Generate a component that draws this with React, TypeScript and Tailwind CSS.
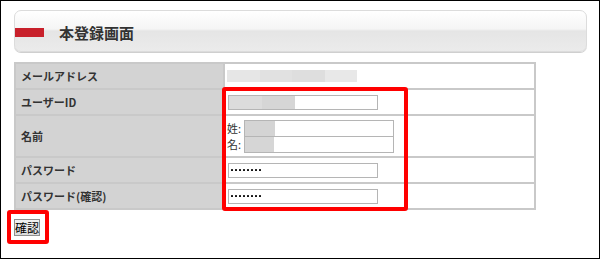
import React from "react";

const Blur = ({ w, h, shades }: { w: number; h: number; shades: string[] }) => (
  <div className="flex" style={{ width: w, height: h }}>
    {shades.map((c, i) => (
      <div key={i} className="flex-1 h-full" style={{ background: c }} />
    ))}
  </div>
);

const Dots = () => (
  <div className="flex gap-[2px] ml-[2px]">
    {Array.from({ length: 8 }).map((_, i) => (
      <div key={i} className="w-[2px] h-[2px] bg-[#111] rounded-[0.5px]" />
    ))}
  </div>
);

export default function App() {
  const label = "pl-[5px] text-[11px] font-bold text-[#333] bg-[#d3d3d3] border-2 border-[#c9c9c9] align-middle";
  const val = "pl-[2px] bg-white border-2 border-[#c9c9c9] align-middle";
  return (
    <div
      className="relative w-[600px] h-[259px] border border-black bg-white overflow-hidden"
      style={{ fontFamily: "'Noto Sans CJK JP', 'Noto Sans', sans-serif" }}
    >
      {/* Header */}
      <div className="ml-[13px] mt-[9px] w-[573px] h-[42px] rounded-[7px] border border-[#dcdcdc] bg-[linear-gradient(to_bottom,#ffffff_0%,#f5f5f5_45%,#e5e5e5_50%,#ebebeb_100%)] flex items-center shadow-[0_1px_0_#cfcfcf]">
        <div className="w-[29px] h-[9px] bg-[#c8202b] ml-0 mt-[2px]" />
        <div className="ml-[15px] mt-[2px] text-[15px] font-bold text-[#333] leading-none">本登録画面</div>
      </div>

      {/* Table */}
      <table className="ml-[13px] mt-[10px] border-collapse w-[522px]">
        <tbody>
          <tr className="h-[26px]">
            <td className={label + " w-[209px]"}>メールアドレス</td>
            <td className={val}>
              <Blur w={130} h={12} shades={["#e6e6e6", "#e1e1e1", "#dedede", "#e8e8e8"]} />
            </td>
          </tr>
          <tr className="h-[26px]">
            <td className={label}>ユーザーID</td>
            <td className={val}>
              <div className="w-[150px] h-[15px] border border-[#b5b5b5] bg-white flex ml-[1px]">
                <Blur w={66} h={13} shades={["#dcdcdc", "#d6d6d6"]} />
              </div>
            </td>
          </tr>
          <tr className="h-[42px]">
            <td className={label}>名前</td>
            <td className={val}>
              <div className="flex flex-col text-[11px] text-[#333] leading-none">
                <div className="flex items-center">
                  <span className="w-[17px]">姓:</span>
                  <div className="w-[150px] h-[17px] border border-[#b5b5b5] bg-white flex">
                    <Blur w={30} h={15} shades={["#d4d4d4"]} />
                  </div>
                </div>
                <div className="flex items-center -mt-[1px]">
                  <span className="w-[17px]">名:</span>
                  <div className="w-[150px] h-[17px] border border-[#b5b5b5] bg-white flex">
                    <Blur w={29} h={15} shades={["#d6d6d6"]} />
                  </div>
                </div>
              </div>
            </td>
          </tr>
          <tr className="h-[26px]">
            <td className={label}>パスワード</td>
            <td className={val}>
              <div className="w-[150px] h-[15px] border border-[#b5b5b5] bg-white flex items-center ml-[1px]">
                <Dots />
              </div>
            </td>
          </tr>
          <tr className="h-[26px]">
            <td className={label}>パスワード(確認)</td>
            <td className={val}>
              <div className="w-[150px] h-[15px] border border-[#b5b5b5] bg-white flex items-center ml-[1px]">
                <Dots />
              </div>
            </td>
          </tr>
        </tbody>
      </table>

      {/* Button */}
      <div className="ml-[13px] mt-[9px] w-[26px] h-[17px] border border-[#8f8f8f] bg-[linear-gradient(to_bottom,#f2f2f2,#dcdcdc)] text-[12px] leading-none text-black flex items-center justify-center">
        確認
      </div>

      {/* Red annotation boxes */}
      <div className="absolute left-[221px] top-[86px] w-[186px] h-[124px] border-[4px] border-[#f00] rounded-[3px]" />
      <div className="absolute left-[6px] top-[209px] w-[42px] h-[34px] border-[4px] border-[#f00] rounded-[3px]" />
    </div>
  );
}
